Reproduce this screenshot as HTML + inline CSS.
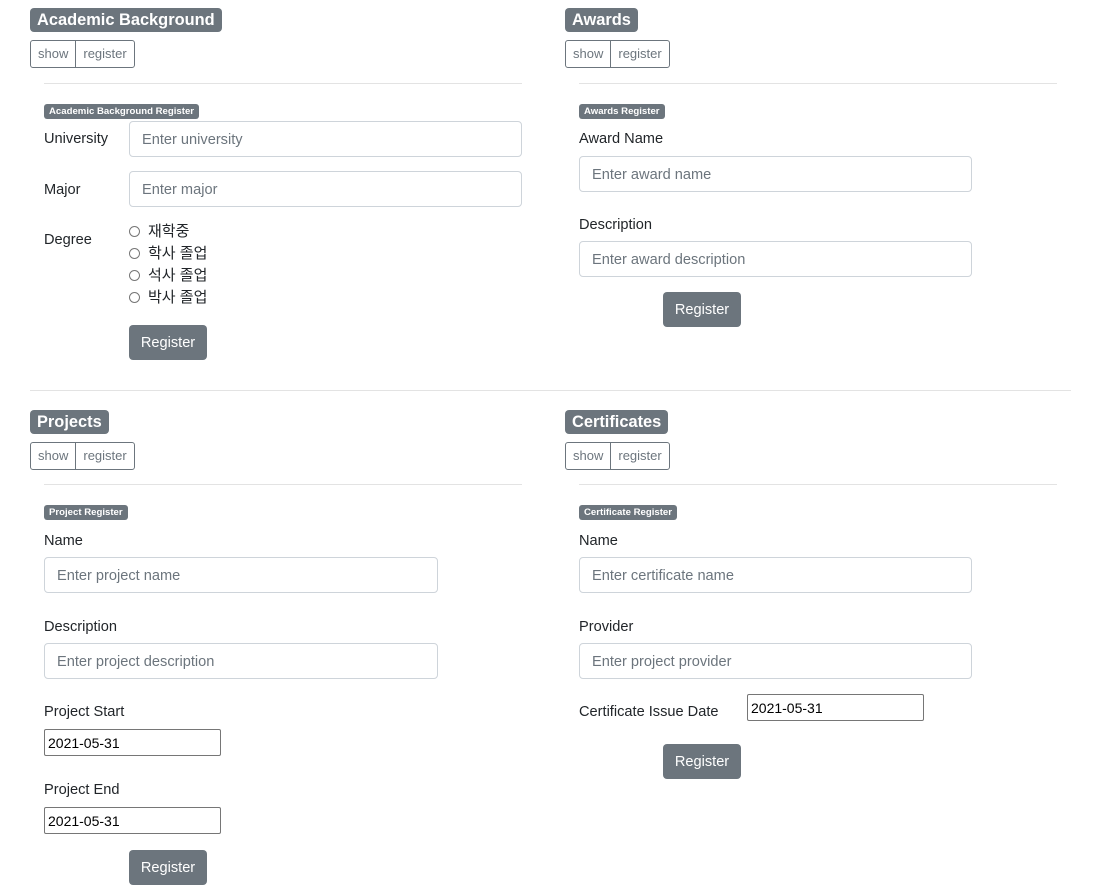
<!DOCTYPE html>
<html><head><meta charset="utf-8"><style>
*{box-sizing:border-box;margin:0;padding:0}
body{width:1100px;height:893px;background:#fff;font-family:"Liberation Sans","Noto Sans CJK KR",sans-serif;color:#212529;position:relative;overflow:hidden}
.a{position:absolute}
.t{background:#6c757d;color:#fff;font-weight:bold;font-size:16.4px;border-radius:4px;padding:0 7px;height:24px;line-height:24px}
.bg{height:28px;display:flex;border:1px solid #6c757d;border-radius:3px;font-size:13px;color:#6c757d}
.bg span{padding:0 7px;line-height:26px}
.bg span+span{border-left:1px solid #6c757d}
.hr{height:1px;background:#e3e3e3}
.sb{background:#6c757d;color:#fff;font-weight:bold;font-size:9.6px;border-radius:3px;height:15px;line-height:15px;padding:0 5px}
.l{font-size:14.6px;line-height:20px}
.i{border:1px solid #ced4da;border-radius:4px;height:36px;font-size:14.6px;color:#6c757d;padding:0 12px;line-height:36px}
.d{border:1px solid #767676;border-radius:2px;height:27px;font-size:14px;color:#000;padding:0 3px;line-height:27px;width:177px}
.b{background:#6c757d;color:#fff;border-radius:4px;width:78px;height:35px;line-height:36px;text-align:center;font-size:14.6px}
.r{font-size:15px;line-height:22px}
.r i{display:inline-block;width:11px;height:11px;border:1px solid #767676;border-radius:50%;margin-right:8px;vertical-align:-1px}
</style></head><body>
<div class="a t" style="left:30px;top:8px">Academic Background</div>
<div class="a bg" style="left:30px;top:40px"><span>show</span><span>register</span></div>
<div class="a hr" style="left:44px;top:83px;width:478px"></div>
<div class="a sb" style="left:44px;top:104px">Academic Background Register</div>
<div class="a l" style="left:44px;top:129px">University</div>
<div class="a i" style="left:129px;top:121px;width:393px">Enter university</div>
<div class="a l" style="left:44px;top:180px">Major</div>
<div class="a i" style="left:129px;top:171px;width:393px">Enter major</div>
<div class="a l" style="left:44px;top:230px">Degree</div>
<div class="a r" style="left:129px;top:221px"><div><i></i>재학중</div><div><i></i>학사 졸업</div><div><i></i>석사 졸업</div><div><i></i>박사 졸업</div></div>
<div class="a b" style="left:129px;top:325px">Register</div>

<div class="a t" style="left:565px;top:8px">Awards</div>
<div class="a bg" style="left:565px;top:40px"><span>show</span><span>register</span></div>
<div class="a hr" style="left:579px;top:83px;width:478px"></div>
<div class="a sb" style="left:579px;top:104px">Awards Register</div>
<div class="a l" style="left:579px;top:129px">Award Name</div>
<div class="a i" style="left:579px;top:156px;width:393px">Enter award name</div>
<div class="a l" style="left:579px;top:215px">Description</div>
<div class="a i" style="left:579px;top:241px;width:393px">Enter award description</div>
<div class="a b" style="left:663px;top:292px">Register</div>

<div class="a hr" style="left:30px;top:390px;width:1041px"></div>

<div class="a t" style="left:30px;top:410px">Projects</div>
<div class="a bg" style="left:30px;top:442px"><span>show</span><span>register</span></div>
<div class="a hr" style="left:44px;top:484px;width:478px"></div>
<div class="a sb" style="left:44px;top:505px">Project Register</div>
<div class="a l" style="left:44px;top:531px">Name</div>
<div class="a i" style="left:44px;top:557px;width:394px">Enter project name</div>
<div class="a l" style="left:44px;top:617px">Description</div>
<div class="a i" style="left:44px;top:643px;width:394px">Enter project description</div>
<div class="a l" style="left:44px;top:702px">Project Start</div>
<div class="a d" style="left:44px;top:729px">2021-05-31</div>
<div class="a l" style="left:44px;top:780px">Project End</div>
<div class="a d" style="left:44px;top:807px">2021-05-31</div>
<div class="a b" style="left:129px;top:850px">Register</div>

<div class="a t" style="left:565px;top:410px">Certificates</div>
<div class="a bg" style="left:565px;top:442px"><span>show</span><span>register</span></div>
<div class="a hr" style="left:579px;top:484px;width:478px"></div>
<div class="a sb" style="left:579px;top:505px">Certificate Register</div>
<div class="a l" style="left:579px;top:531px">Name</div>
<div class="a i" style="left:579px;top:557px;width:393px">Enter certificate name</div>
<div class="a l" style="left:579px;top:617px">Provider</div>
<div class="a i" style="left:579px;top:643px;width:393px">Enter project provider</div>
<div class="a l" style="left:579px;top:702px">Certificate Issue Date</div>
<div class="a d" style="left:747px;top:694px">2021-05-31</div>
<div class="a b" style="left:663px;top:744px">Register</div>
</body></html>
